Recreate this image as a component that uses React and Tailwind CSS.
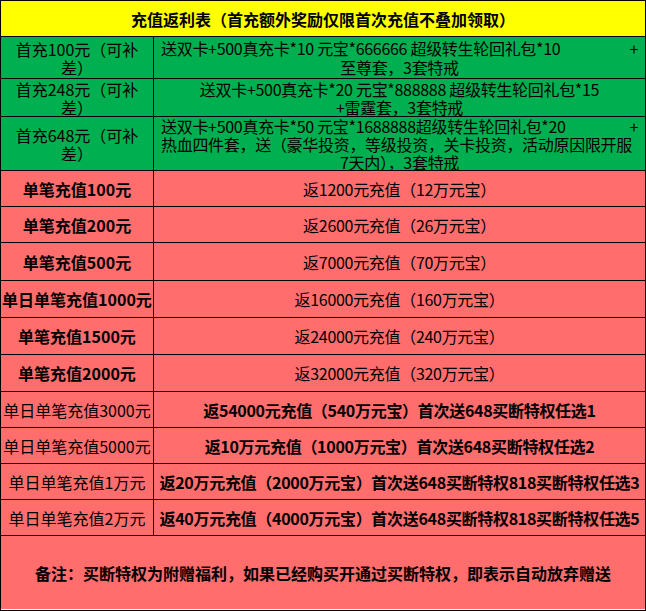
import React from "react";

const font = "font-['Noto_Sans_CJK_SC','Noto_Sans_CJK_JP',sans-serif]";

const singles = [
  { h: "h-[36px]", left: "单笔充值100元", right: "返1200元充值（12万元宝）" },
  { h: "h-[36px]", left: "单笔充值200元", right: "返2600元充值（26万元宝）" },
  { h: "h-[38px]", left: "单笔充值500元", right: "返7000元充值（70万元宝）" },
  { h: "h-[37px]", left: "单日单笔充值1000元", right: "返16000元充值（160万元宝）" },
  { h: "h-[37px]", left: "单笔充值1500元", right: "返24000元充值（240万元宝）" },
  { h: "h-[37px]", left: "单笔充值2000元", right: "返32000元充值（320万元宝）" },
];

const bonus = [
  { left: "单日单笔充值3000元", right: "返54000元充值（540万元宝）首次送648买断特权任选1" },
  { left: "单日单笔充值5000元", right: "返10万元充值（1000万元宝）首次送648买断特权任选2" },
  { left: "单日单笔充值1万元", right: "返20万元充值（2000万元宝）首次送648买断特权818买断特权任选3" },
  { left: "单日单笔充值2万元", right: "返40万元充值（4000万元宝）首次送648买断特权818买断特权任选5" },
];

const Row = ({ h, bg, children }) => (
  <div className={`grid grid-cols-[153px_1fr] border-b border-black ${h} ${bg}`}>{children}</div>
);

const LeftCell = ({ children, className = "" }) => (
  <div className={`flex items-center justify-center border-r border-black text-center ${className}`}>
    {children}
  </div>
);

export default function App() {
  return (
    <div className={`w-[646px] h-[611px] border border-black bg-white text-black text-[16px] ${font}`}>
      {/* Header */}
      <div className="flex h-[36px] items-center justify-center border-b border-black bg-[#ffff00] font-bold">
        充值返利表（首充额外奖励仅限首次充值不叠加领取）
      </div>

      {/* First recharge rows */}
      <Row h="h-[42px]" bg="bg-[#00b050]">
        <LeftCell className="leading-[18px] px-2">首充100元（可补差）</LeftCell>
        <div className="flex flex-col justify-center px-[7px] leading-[19px] tracking-[-0.3px]">
          <div className="flex justify-between">
            <span>送双卡+500真充卡*10 元宝*666666 超级转生轮回礼包*10</span>
            <span>+</span>
          </div>
          <div className="text-center">至尊套，3套特戒</div>
        </div>
      </Row>
      <Row h="h-[38px]" bg="bg-[#00b050]">
        <LeftCell className="leading-[18px] px-2">首充248元（可补差）</LeftCell>
        <div className="flex flex-col justify-center px-[7px] text-center leading-[18px] tracking-[-0.3px]">
          <div>送双卡+500真充卡*20 元宝*888888 超级转生轮回礼包*15</div>
          <div>+雷霆套，3套特戒</div>
        </div>
      </Row>
      <Row h="h-[54px]" bg="bg-[#00b050]">
        <LeftCell className="leading-[18px] px-2">首充648元（可补差）</LeftCell>
        <div className="flex flex-col justify-center px-[7px] leading-[18px] tracking-[-0.3px]">
          <div className="flex justify-between">
            <span>送双卡+500真充卡*50 元宝*1688888超级转生轮回礼包*20</span>
            <span>+</span>
          </div>
          <div className="whitespace-nowrap">热血四件套，送（豪华投资，等级投资，关卡投资，活动原因限开服</div>
          <div className="text-center">7天内），3套特戒</div>
        </div>
      </Row>

      {/* Single recharge rows */}
      {singles.map((r) => (
        <Row key={r.left} h={r.h} bg="bg-[#ff6d6d]">
          <LeftCell className="font-bold whitespace-nowrap">{r.left}</LeftCell>
          <div className="flex items-center justify-center tracking-[-0.3px]">{r.right}</div>
        </Row>
      ))}

      {bonus.map((r) => (
        <Row key={r.left} h="h-[36px]" bg="bg-[#ff6d6d]">
          <LeftCell className="whitespace-nowrap">{r.left}</LeftCell>
          <div className="flex items-center justify-center whitespace-nowrap font-bold tracking-[-0.3px]">
            {r.right}
          </div>
        </Row>
      ))}

      {/* Note */}
      <div className="flex h-[73px] items-center justify-center bg-[#ff6d6d] font-bold">
        备注：买断特权为附赠福利，如果已经购买开通过买断特权，即表示自动放弃赠送
      </div>
    </div>
  );
}
